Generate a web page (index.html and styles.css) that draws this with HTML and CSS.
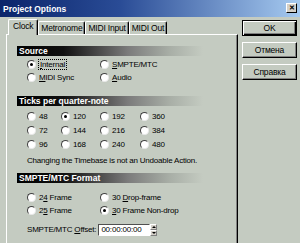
FILE: index.html
```html
<!DOCTYPE html>
<html lang="en">
<head>
    <meta charset="UTF-8">
    <title>Project Options</title>
    <link rel="stylesheet" href="styles.css">
</head>
<body>
    <div class="window">
        <!-- Barra del titolo -->
        <div class="titlebar">
            <span class="title">Project Options</span>
            <span class="close">&#x2715;</span>
        </div>

        <div class="content">
            <div class="sheet">
                <div class="tabs">
                    <div class="tab active">Clock</div>
                    <div class="tab">Metronome</div>
                    <div class="tab">MIDI Input</div>
                    <div class="tab">MIDI Out</div>
                </div>

                <div class="panel">
                    <div class="group-head">Source</div>
                    <div class="grid two">
                        <label class="radio"><span class="dot checked"></span><span class="focus"><u>I</u>nternal</span></label>
                        <label class="radio"><span class="dot"></span><span><u>S</u>MPTE/MTC</span></label>
                        <label class="radio"><span class="dot"></span><span><u>M</u>IDI Sync</span></label>
                        <label class="radio"><span class="dot"></span><span><u>A</u>udio</span></label>
                    </div>

                    <div class="group-head">Ticks per quarter-note</div>
                    <div class="grid four">
                        <label class="radio"><span class="dot"></span>48</label>
                        <label class="radio"><span class="dot checked"></span>120</label>
                        <label class="radio"><span class="dot"></span>192</label>
                        <label class="radio"><span class="dot"></span>360</label>
                        <label class="radio"><span class="dot"></span>72</label>
                        <label class="radio"><span class="dot"></span>144</label>
                        <label class="radio"><span class="dot"></span>216</label>
                        <label class="radio"><span class="dot"></span>384</label>
                        <label class="radio"><span class="dot"></span>96</label>
                        <label class="radio"><span class="dot"></span>168</label>
                        <label class="radio"><span class="dot"></span>240</label>
                        <label class="radio"><span class="dot"></span>480</label>
                    </div>
                    <div class="note">Changing the Timebase is not an Undoable Action.</div>

                    <div class="group-head">SMPTE/MTC Format</div>
                    <div class="grid two fmt">
                        <label class="radio"><span class="dot"></span><span>2<u>4</u> Frame</span></label>
                        <label class="radio"><span class="dot"></span><span>30 <u>D</u>rop-frame</span></label>
                        <label class="radio"><span class="dot"></span><span>2<u>5</u> Frame</span></label>
                        <label class="radio"><span class="dot checked"></span><span><u>3</u>0 Frame Non-drop</span></label>
                    </div>
                    <div class="offset">
                        <span>SMPTE/MTC <u>O</u>ffset:</span>
                        <span class="field">00:00:00:00</span>
                        <span class="spin"><span class="up"></span><span class="down"></span></span>
                    </div>
                </div>
            </div>

            <!-- Colonna dei bottoni -->
            <div class="actions">
                <button class="default">OK</button>
                <button>Отмена</button>
                <button>Справка</button>
            </div>
        </div>
    </div>
</body>
</html>
```

FILE: styles.css
```css
/* Impostazioni generali */
body {
    margin: 0;
    width: 300px;
    height: 243px;
    overflow: hidden;
    font-family: "Liberation Sans", Arial, sans-serif;
    font-size: 8px;
    letter-spacing: -0.2px;
    color: #000;
}

.window {
    width: 300px;
    height: 243px;
    overflow: hidden;
    background-color: #c4cbc1;
}

.titlebar {
    height: 17px;
    display: flex;
    align-items: center;
    justify-content: space-between;
    padding: 0 3px;
    background: linear-gradient(90deg, #0a246a 0%, #2a4c96 40%, #a6caf0 100%);
}

.title {
    color: #fff;
    font-weight: bold;
    font-size: 8.5px;
    letter-spacing: 0;
}

.close {
    width: 9px;
    height: 8px;
    margin-top: -1px;
    background: #d4d0c8;
    border: 1px solid;
    border-color: #fff #000 #000 #fff;
    font-size: 7px;
    line-height: 8px;
    text-align: center;
    font-weight: bold;
    letter-spacing: 0;
}

.content {
    display: flex;
    padding-top: 2px;
}

.sheet {
    margin-left: 6px;
    width: 232px;
}

.tabs {
    display: flex;
    align-items: flex-end;
    height: 15px;
    padding-left: 2px;
}

.tab {
    height: 12px;
    line-height: 12px;
    padding: 0 2px;
    font-size: 8.5px;
    border: 1px solid;
    border-bottom: none;
    border-color: #fff #000 #000 #fff;
    box-shadow: inset -1px 0 #808080;
    border-radius: 2px 2px 0 0;
}

.tab.active {
    height: 15px;
    line-height: 13px;
    padding: 0 4px;
    margin-bottom: -1px;
    background-color: #c4cbc1;
    position: relative;
    z-index: 1;
}

.panel {
    height: 208px;
    border-left: 1px solid #fff;
    border-top: 1px solid #fff;
    border-right: 1px solid #000;
    box-shadow: inset -1px 0 #808080;
    padding-left: 10px;
}

.group-head {
    width: 184px;
    height: 10px;
    line-height: 10px;
    padding-left: 2px;
    color: #fff;
    font-weight: bold;
    font-size: 8.5px;
    letter-spacing: 0;
    background: linear-gradient(90deg, #000 0%, #101010 25%, #7c7c7c 60%, #a8aea6 82%, rgba(196, 203, 193, 0) 100%);
    margin-top: 11px;
}

.grid {
    display: grid;
    padding-left: 10px;
    margin-top: 2px;
}

.grid.two {
    grid-template-columns: 73px auto;
    grid-auto-rows: 13px;
}

.grid.four {
    grid-template-columns: 34px 39px 40px auto;
    grid-auto-rows: 14px;
    margin-top: 3px;
}

.grid.fmt {
    margin-top: 8px;
}

.grid.two + .group-head {
    margin-top: 12px;
}

.radio {
    display: flex;
    align-items: center;
    gap: 3px;
    white-space: nowrap;
}

.dot {
    width: 7px;
    height: 7px;
    border-radius: 50%;
    background: #fff;
    border: 1px solid;
    border-color: #404040 #e8e8e8 #e8e8e8 #404040;
    position: relative;
    flex-shrink: 0;
}

.dot.checked::after {
    content: "";
    position: absolute;
    left: 2px;
    top: 2px;
    width: 3px;
    height: 3px;
    border-radius: 50%;
    background: #000;
}

.focus {
    outline: 1px dotted #000;
    padding: 0 1px;
}

.note {
    padding-left: 10px;
    margin-top: 4px;
    height: 12px;
    line-height: 12px;
}

.note + .group-head {
    margin-top: 6px;
}

.offset {
    display: flex;
    align-items: center;
    padding-left: 10px;
    margin-top: 6px;
    height: 13px;
}

.field {
    margin-left: 2px;
    width: 48px;
    height: 10px;
    line-height: 10px;
    padding-left: 2px;
    background: #fff;
    border: 1px solid;
    border-color: #505050 #fff #fff #505050;
    font-size: 8px;
}

.spin {
    display: flex;
    flex-direction: column;
    width: 7px;
    height: 12px;
}

.spin span {
    flex: 1;
    background: #d4d0c8;
    border: 1px solid;
    border-color: #fff #808080 #808080 #fff;
    position: relative;
}

.spin .up::after,
.spin .down::after {
    content: "";
    position: absolute;
    left: 1px;
    border-left: 2px solid transparent;
    border-right: 2px solid transparent;
}

.spin .up::after {
    top: 1px;
    border-bottom: 2px solid #000;
}

.spin .down::after {
    top: 1px;
    border-top: 2px solid #000;
}

.actions {
    display: flex;
    flex-direction: column;
    gap: 6px;
    margin-left: 4px;
    padding-top: 1px;
}

button {
    width: 55px;
    height: 16px;
    padding: 0;
    background-color: #c4cbc1;
    border: 1px solid;
    border-color: #fff #000 #000 #fff;
    box-shadow: inset -1px -1px #808080;
    font-family: "Liberation Sans", Arial, sans-serif;
    font-size: 8.5px;
    letter-spacing: -0.2px;
    color: #000;
}

button.default {
    border-color: #000;
    box-shadow: inset 1px 1px #fff, inset -1px -1px #000, inset -2px -2px #808080;
}
```
